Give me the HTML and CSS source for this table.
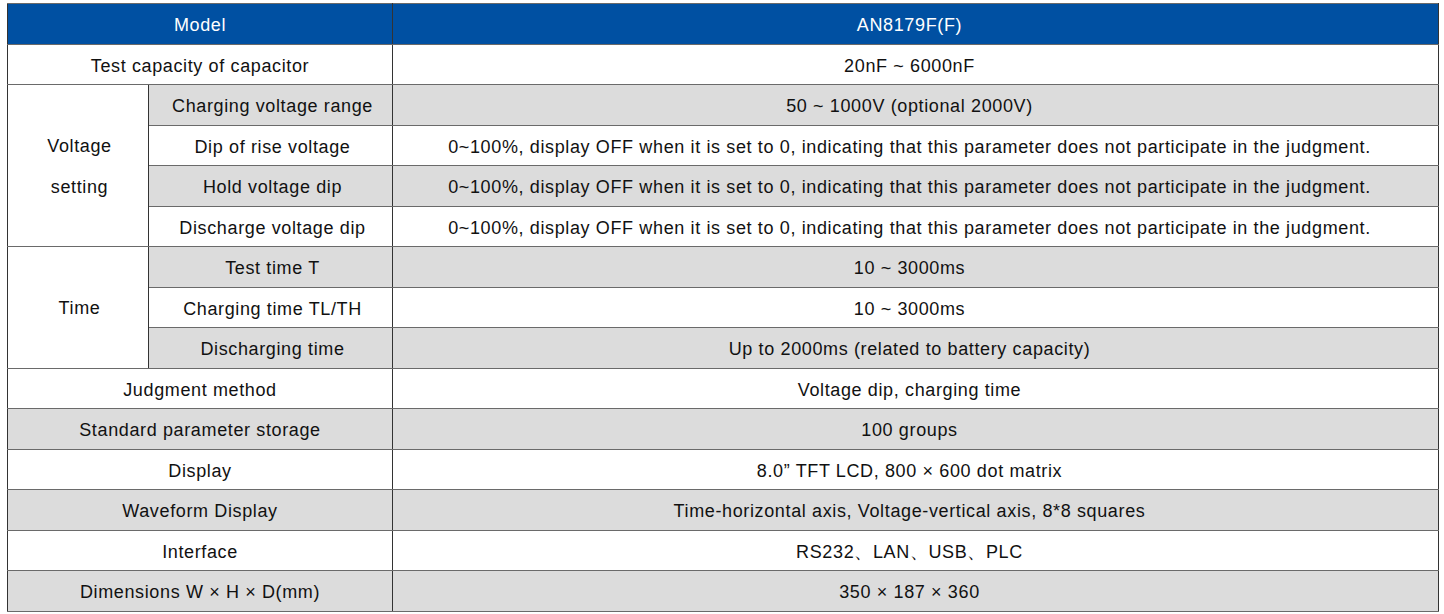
FILE: index.html
```html
<!DOCTYPE html>
<html>
<head>
<meta charset="utf-8">
<link rel="stylesheet" href="styles.css">
</head>
<body>
<table class="spec">
  <colgroup><col class="c1"><col class="c2"><col class="c3"></colgroup>
  <tr class="head"><th colspan="2">Model</th><th class="val">AN8179F(F)</th></tr>
  <tr><td colspan="2">Test capacity of capacitor</td><td class="val">20nF ~ 6000nF</td></tr>
  <tr class="g"><td rowspan="4" class="merge">Voltage<br>setting</td><td class="sub">Charging voltage range</td><td class="val">50 ~ 1000V (optional 2000V)</td></tr>
  <tr><td class="sub">Dip of rise voltage</td><td class="val">0~100%, display OFF when it is set to 0, indicating that this parameter does not participate in the judgment.</td></tr>
  <tr class="g"><td class="sub">Hold voltage dip</td><td class="val">0~100%, display OFF when it is set to 0, indicating that this parameter does not participate in the judgment.</td></tr>
  <tr><td class="sub">Discharge voltage dip</td><td class="val">0~100%, display OFF when it is set to 0, indicating that this parameter does not participate in the judgment.</td></tr>
  <tr class="g"><td rowspan="3" class="merge">Time</td><td class="sub">Test time T</td><td class="val">10 ~ 3000ms</td></tr>
  <tr><td class="sub">Charging time TL/TH</td><td class="val">10 ~ 3000ms</td></tr>
  <tr class="g"><td class="sub">Discharging time</td><td class="val">Up to 2000ms (related to battery capacity)</td></tr>
  <tr><td colspan="2">Judgment method</td><td class="val">Voltage dip, charging time</td></tr>
  <tr class="g"><td colspan="2">Standard parameter storage</td><td class="val">100 groups</td></tr>
  <tr><td colspan="2">Display</td><td class="val">8.0” TFT LCD, 800 × 600 dot matrix</td></tr>
  <tr class="g"><td colspan="2">Waveform Display</td><td class="val">Time-horizontal axis, Voltage-vertical axis, 8*8 squares</td></tr>
  <tr><td colspan="2">Interface</td><td class="val">RS232、LAN、USB、PLC</td></tr>
  <tr class="g"><td colspan="2">Dimensions W × H × D(mm)</td><td class="val">350 × 187 × 360</td></tr>
</table>
</body>
</html>
```
FILE: styles.css
```css
html, body { background: #fff; }
body {
  margin: 3px 0 0 7px;
  font-family: "Liberation Sans", Arial, sans-serif;
  font-size: 18px;
  letter-spacing: 0.63px;
  color: #111;
}
.spec {
  border-collapse: collapse;
  table-layout: fixed;
  width: 1431px;
  border: 1px solid #444;
}
.c1 { width: 141px; }
.c2 { width: 244px; }
.c3 { width: 1046px; }
.spec th, .spec td {
  height: 40.53px;
  padding: 3px 0 0 0;
  text-align: center;
  vertical-align: middle;
  border-top: 1px solid #6a6a6a;
  border-bottom: 1px solid #6a6a6a;
  border-left: 1px solid #333;
  border-right: 1px solid #333;
  background: #fff;
  box-sizing: border-box;
  line-height: 20px;
}
.spec .val { padding-right: 12px; }
.spec .sub { padding-left: 4px; }
.spec .head th {
  background: #0050a2;
  color: #fff;
  font-weight: normal;
}
.spec .g td { background: #dcdcdc; }
.spec .g td.merge, .spec td.merge { background: #fff; line-height: 41px; padding-left: 3px; }
```
